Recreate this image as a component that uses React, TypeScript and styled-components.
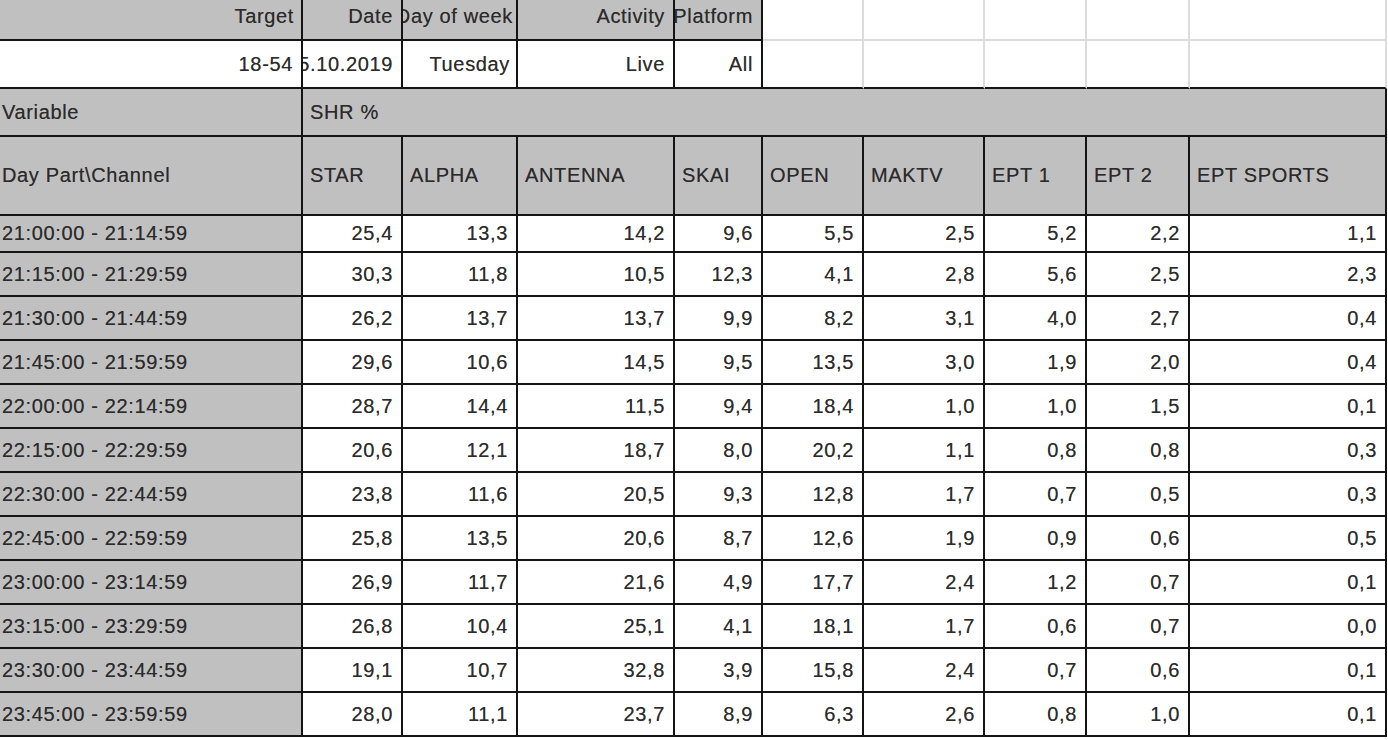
import React from "react";
import styled, { createGlobalStyle } from "styled-components";

const GlobalStyle = createGlobalStyle`
  html, body {
    margin: 0;
    padding: 0;
    background: #ffffff;
    overflow: hidden;
  }
  body {
    font-family: "Liberation Sans", Arial, sans-serif;
  }
`;

const COLS = [303, 100, 115, 157, 88, 101, 121, 102, 103, 197];

const Sheet = styled.div`
  display: grid;
  grid-template-columns: ${COLS.map((c) => `${c}px`).join(" ")};
  grid-template-rows: 48px 48px 48px 79px 37px repeat(11, 44px);
  margin-top: -7px;
  width: max-content;
  background: #ffffff;
`;

type Align = "left" | "right";
type Tone = "gray" | "white";
type Line = "dark" | "light";

const lineColor = (l: Line) => (l === "dark" ? "#141414" : "#dcdcdc");

const Cell = styled.div<{
  $tone: Tone;
  $align: Align;
  $right?: Line;
  $bottom?: Line;
  $span?: string;
  $first?: boolean;
  $padR?: number;
}>`
  box-sizing: border-box;
  display: flex;
  align-items: center;
  justify-content: ${(p) => (p.$align === "right" ? "flex-end" : "flex-start")};
  overflow: hidden;
  white-space: nowrap;
  background: ${(p) => (p.$tone === "gray" ? "#c0c0c0" : "#ffffff")};
  border-right: 2px solid ${(p) => lineColor(p.$right ?? "dark")};
  border-bottom: 2px solid ${(p) => lineColor(p.$bottom ?? "dark")};
  padding-right: ${(p) => (p.$align === "right" ? `${p.$padR ?? 8}px` : "0")};
  padding-left: ${(p) => (p.$align === "left" ? (p.$first ? "2px" : "7px") : "0")};
  ${(p) => (p.$span ? `grid-column: ${p.$span};` : "")}
  font-family: "Liberation Sans", Arial, sans-serif;
  font-size: 20px;
  letter-spacing: 0.65px;
  color: #2b2b2b;
  text-shadow: 0 0 0.6px rgba(40, 40, 40, 0.6);
`;

const Text = styled.span`
  flex-shrink: 0;
`;

const topLabels: [string, number][] = [
  ["Target", 7],
  ["Date", 8],
  ["Day of week", 3],
  ["Activity", 8],
  ["Platform", 8],
];
const topValues: [string, number][] = [
  ["18-54", 8],
  ["15.10.2019", 8],
  ["Tuesday", 6],
  ["Live", 8],
  ["All", 8],
];
const channels = [
  "STAR",
  "ALPHA",
  "ANTENNA",
  "SKAI",
  "OPEN",
  "MAKTV",
  "EPT 1",
  "EPT 2",
  "EPT SPORTS",
];

const rows: [string, string[]][] = [
  ["21:00:00 - 21:14:59", ["25,4", "13,3", "14,2", "9,6", "5,5", "2,5", "5,2", "2,2", "1,1"]],
  ["21:15:00 - 21:29:59", ["30,3", "11,8", "10,5", "12,3", "4,1", "2,8", "5,6", "2,5", "2,3"]],
  ["21:30:00 - 21:44:59", ["26,2", "13,7", "13,7", "9,9", "8,2", "3,1", "4,0", "2,7", "0,4"]],
  ["21:45:00 - 21:59:59", ["29,6", "10,6", "14,5", "9,5", "13,5", "3,0", "1,9", "2,0", "0,4"]],
  ["22:00:00 - 22:14:59", ["28,7", "14,4", "11,5", "9,4", "18,4", "1,0", "1,0", "1,5", "0,1"]],
  ["22:15:00 - 22:29:59", ["20,6", "12,1", "18,7", "8,0", "20,2", "1,1", "0,8", "0,8", "0,3"]],
  ["22:30:00 - 22:44:59", ["23,8", "11,6", "20,5", "9,3", "12,8", "1,7", "0,7", "0,5", "0,3"]],
  ["22:45:00 - 22:59:59", ["25,8", "13,5", "20,6", "8,7", "12,6", "1,9", "0,9", "0,6", "0,5"]],
  ["23:00:00 - 23:14:59", ["26,9", "11,7", "21,6", "4,9", "17,7", "2,4", "1,2", "0,7", "0,1"]],
  ["23:15:00 - 23:29:59", ["26,8", "10,4", "25,1", "4,1", "18,1", "1,7", "0,6", "0,7", "0,0"]],
  ["23:30:00 - 23:44:59", ["19,1", "10,7", "32,8", "3,9", "15,8", "2,4", "0,7", "0,6", "0,1"]],
  ["23:45:00 - 23:59:59", ["28,0", "11,1", "23,7", "8,9", "6,3", "2,6", "0,8", "1,0", "0,1"]],
];

const EMPTY = [0, 1, 2, 3, 4];

export default function App() {
  return (
    <>
      <GlobalStyle />
      <Sheet>
        {topLabels.map(([t, pad]) => (
          <Cell key={`l-${t}`} $tone="gray" $align="right" $padR={pad}>
            <Text>{t}</Text>
          </Cell>
        ))}
        {EMPTY.map((i) => (
          <Cell key={`le-${i}`} $tone="white" $align="right" $right="light" $bottom="light" />
        ))}

        {topValues.map(([t, pad]) => (
          <Cell key={`v-${t}`} $tone="white" $align="right" $padR={pad}>
            <Text>{t}</Text>
          </Cell>
        ))}
        {EMPTY.map((i) => (
          <Cell key={`ve-${i}`} $tone="white" $align="right" $right="light" />
        ))}

        <Cell $tone="gray" $align="left" $first>
          <Text>Variable</Text>
        </Cell>
        <Cell $tone="gray" $align="left" $span="2 / -1">
          <Text>SHR %</Text>
        </Cell>

        <Cell $tone="gray" $align="left" $first>
          <Text>Day Part\Channel</Text>
        </Cell>
        {channels.map((c) => (
          <Cell key={c} $tone="gray" $align="left">
            <Text>{c}</Text>
          </Cell>
        ))}

        {rows.map(([label, values]) => (
          <React.Fragment key={label}>
            <Cell $tone="gray" $align="left" $first>
              <Text>{label}</Text>
            </Cell>
            {values.map((v, i) => (
              <Cell key={`${label}-${i}`} $tone="white" $align="right">
                <Text>{v}</Text>
              </Cell>
            ))}
          </React.Fragment>
        ))}
      </Sheet>
    </>
  );
}
